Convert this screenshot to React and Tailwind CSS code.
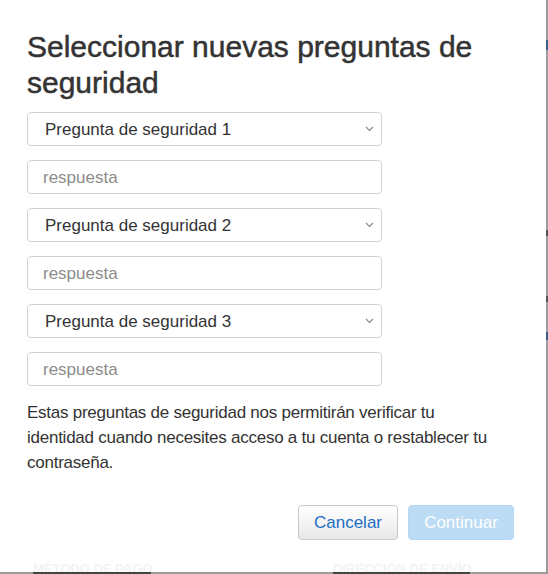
import React from "react";

const font = { fontFamily: '"Liberation Sans", Arial, sans-serif' };

function Chevron() {
  return (
    <svg width="9" height="6" viewBox="0 0 9 6" className="shrink-0">
      <polyline points="1,1 4.5,4.5 8,1" fill="none" stroke="#8a8a8a" strokeWidth="1.2" />
    </svg>
  );
}

function SelectBox({ label }) {
  return (
    <div className="h-[34px] w-[355px] rounded-[4px] border border-[#d2d2d2] bg-white flex items-center justify-between pl-[17px] pr-[7px]">
      <span className="text-[17px] text-[#333333] leading-none">{label}</span>
      <Chevron />
    </div>
  );
}

function AnswerBox() {
  return (
    <div className="h-[34px] w-[355px] rounded-[4px] border border-[#d2d2d2] bg-white flex items-center pl-[15px]">
      <span className="text-[17px] text-[#8c8c8c] leading-none">respuesta</span>
    </div>
  );
}

export default function App() {
  return (
    <div style={font} className="w-[548px] h-[574px] overflow-hidden bg-[#9c9c9c] flex flex-col">
      <div className="flex h-[572px]">
        <div className="w-[546px] h-[572px] bg-white flex flex-col overflow-hidden">
          <h1 className="mt-[29px] ml-[27px] text-[30px] leading-[36px] font-normal text-[#333333] w-[490px] [-webkit-text-stroke:0.5px_#333333]">
            Seleccionar nuevas preguntas de seguridad
          </h1>
          <div className="mt-[11px] ml-[27px] flex flex-col gap-[14px]">
            <SelectBox label="Pregunta de seguridad 1" />
            <AnswerBox />
            <SelectBox label="Pregunta de seguridad 2" />
            <AnswerBox />
            <SelectBox label="Pregunta de seguridad 3" />
            <AnswerBox />
          </div>
          <p className="mt-[14px] ml-[27px] w-[468px] text-[17px] leading-[25px] tracking-[-0.25px] text-[#333333]">
            Estas preguntas de seguridad nos permitirán verificar tu identidad cuando necesites acceso a tu cuenta o restablecer tu contraseña.
          </p>
          <div className="mt-[30px] mr-[32px] flex justify-end gap-[10px]">
            <button className="h-[35px] w-[100px] rounded-[4px] border border-[#c8c8c8] bg-gradient-to-b from-white to-[#e8e8e8] text-[17px] text-[#1d6ec5] leading-none">
              Cancelar
            </button>
            <button className="h-[35px] w-[106px] rounded-[4px] border border-[#b6d6f2] bg-[#bcdbf5] text-[17px] text-white leading-none">
              Continuar
            </button>
          </div>
          <div className="mt-auto h-[10px] flex items-start pl-[33px] text-[13px] font-bold leading-none uppercase text-[#f3f3f3]">
            <span className="w-[300px]">Método de pago</span>
            <span>Dirección de envío</span>
          </div>
        </div>
        <div className="w-[2px] flex flex-col bg-[#9c9c9c]">
          <div className="mt-[40px] h-[10px] bg-[#3a5f8a]" />
          <div className="mt-[180px] h-[6px] bg-[#555]" />
          <div className="mt-[60px] h-[6px] bg-[#555]" />
          <div className="mt-[30px] h-[8px] bg-[#3a5f8a]" />
        </div>
      </div>
      <div className="h-[2px] flex">
        <div className="ml-[33px] w-[118px] bg-[#444]" />
        <div className="ml-[182px] w-[137px] bg-[#444]" />
      </div>
    </div>
  );
}
